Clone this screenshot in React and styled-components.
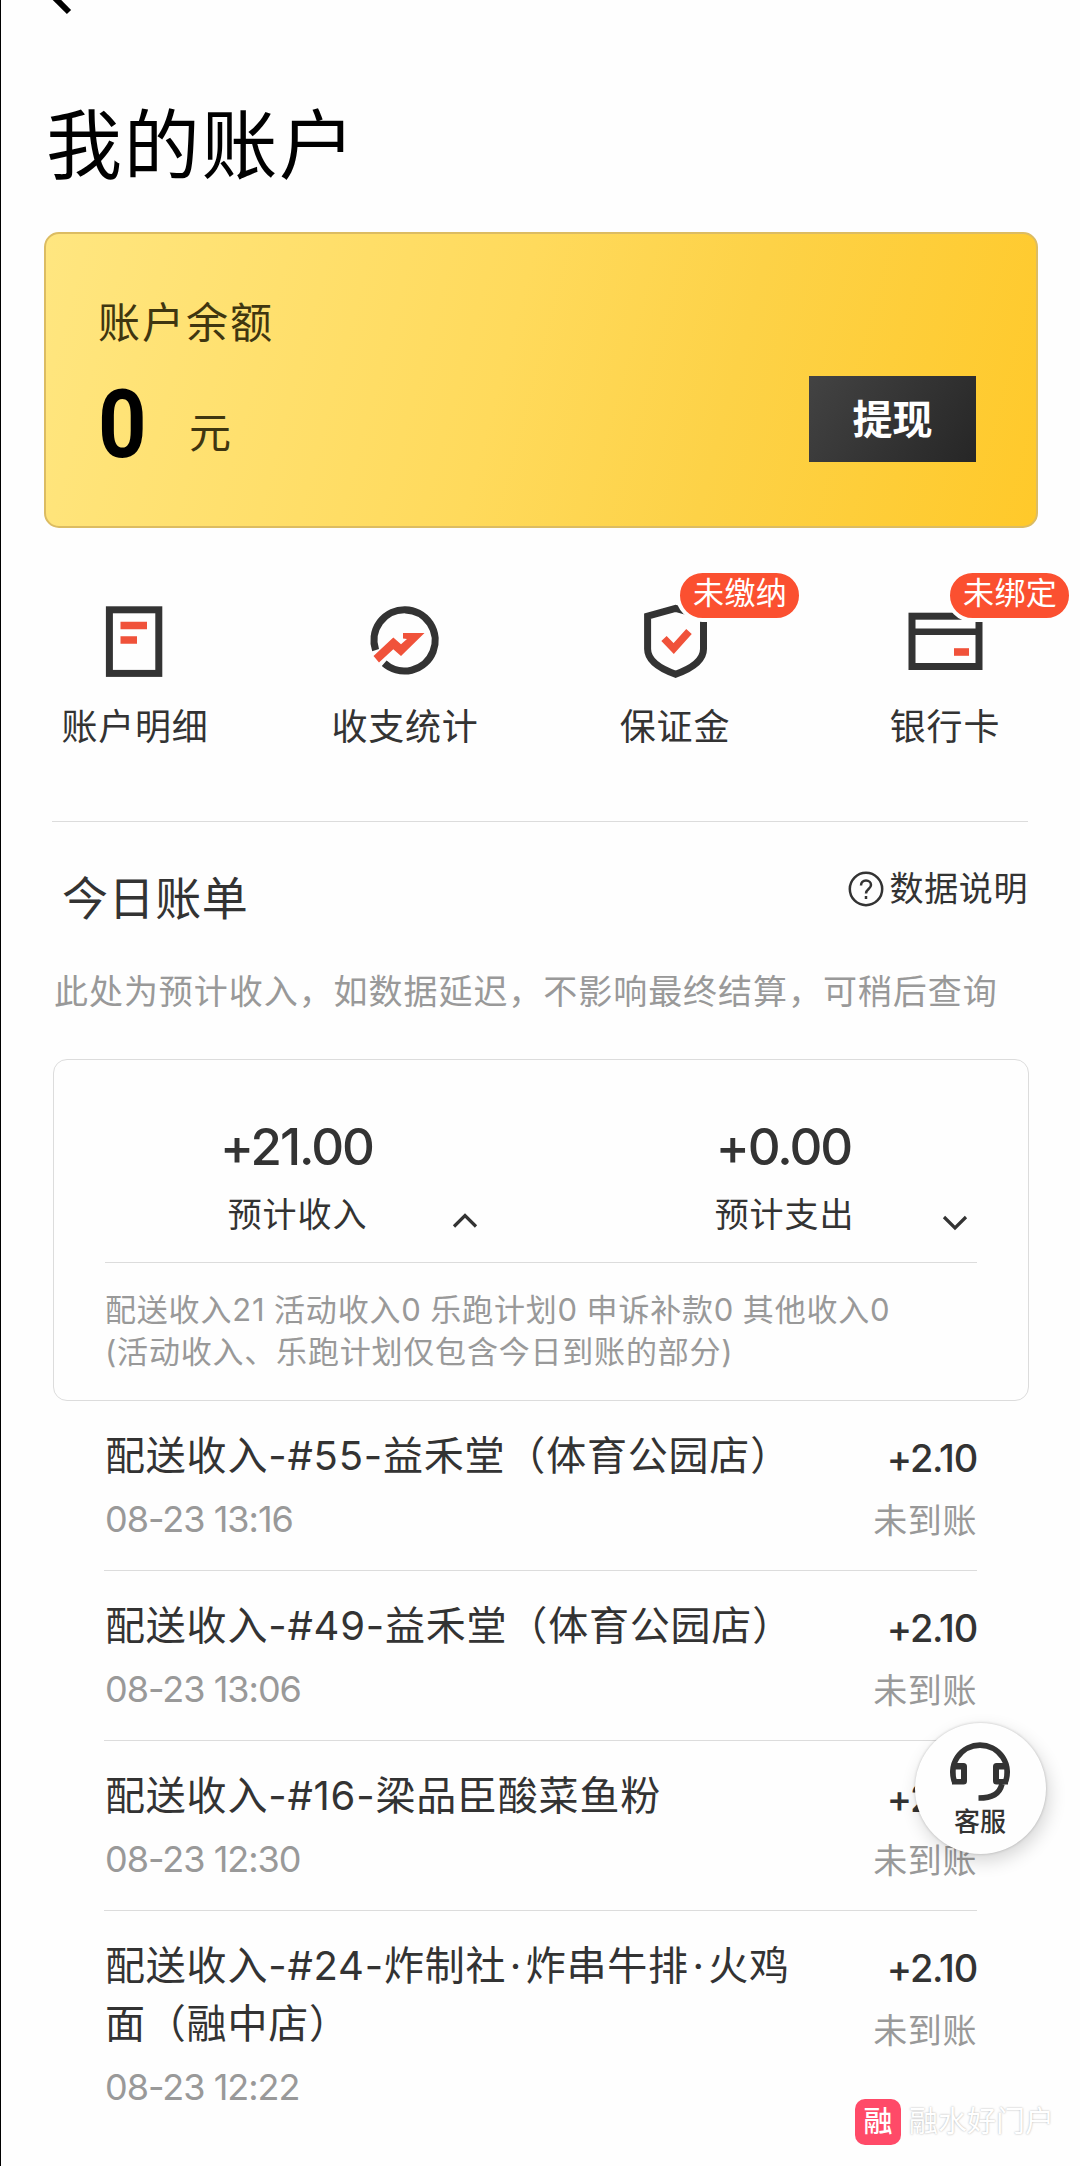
import React, { Fragment } from 'react';
import styled, { createGlobalStyle } from 'styled-components';

const GlobalStyle = createGlobalStyle`
  * {
    box-sizing: border-box;
  }
  body {
    margin: 0;
    background: #fefefe;
    font-family: Inter, 'Noto Sans CJK SC', sans-serif;
    color: #333;
  }
`;

const Page = styled.div`
  position: relative;
  width: 1080px;
  height: 2166px;
  overflow: hidden;
  background: #fefefe;
  box-shadow: inset 1px 0 0 #000;
`;

const NavBar = styled.div`
  height: 101px;
  padding-left: 40px;
  svg {
    display: block;
  }
`;

const PageTitle = styled.h1`
  margin: 0 0 43px 46px;
  font-size: 76px;
  font-weight: 400;
  letter-spacing: 1.7px;
  line-height: 88px;
  color: #000;
`;

const BalanceCard = styled.div`
  display: flex;
  justify-content: space-between;
  margin: 0 42px 0 44px;
  height: 296px;
  padding: 60px 60px 0 52px;
  border: 2px solid #dcbc62;
  border-radius: 15px;
  background: linear-gradient(105deg, #ffe680 0%, #ffda5c 46%, #fdd247 68%, #ffc92a 100%);
`;

const BalanceLabel = styled.div`
  font-size: 42px;
  letter-spacing: 2px;
  line-height: 58px;
  color: #3f3610;
`;

const BalanceRow = styled.div`
  display: flex;
  align-items: flex-start;
  margin-top: 33px;
`;

const BalanceValue = styled.div`
  width: 91px;
  font-family: Roboto, sans-serif;
  font-size: 94px;
  font-weight: 700;
  line-height: 80px;
  color: #000;
  transform: scaleX(0.9);
  transform-origin: 0 50%;
`;

const BalanceUnit = styled.div`
  margin-top: 19px;
  font-size: 42px;
  line-height: 58px;
  color: #3f3610;
`;

const WithdrawButton = styled.button`
  width: 167px;
  height: 86px;
  margin-top: 82px;
  padding: 2px 0 0;
  border: none;
  background: linear-gradient(125deg, #434343, #262626);
  color: #fff;
  font-family: inherit;
  font-size: 40px;
  font-weight: 600;
  line-height: 84px;
`;

const Menu = styled.div`
  display: grid;
  grid-template-columns: repeat(4, 1fr);
  height: 293px;
  padding-top: 75px;
`;

const MenuItem = styled.div`
  position: relative;
  display: flex;
  flex-direction: column;
  align-items: center;
  gap: 26px;
  font-size: 36px;
  letter-spacing: 0.8px;
  line-height: 44px;
`;

const Badge = styled.span`
  position: absolute;
  top: -34px;
  left: 136px;
  height: 53px;
  padding: 0 12px 0 13px;
  border: 4px solid #fefefe;
  border-radius: 27px;
  background: #fb5030;
  color: #fff;
  font-size: 31px;
  letter-spacing: 0.4px;
  line-height: 39px;
  white-space: nowrap;
`;

const Divider = styled.div`
  height: 1px;
  margin: 0 ${({ $inset }) => $inset}px;
  background: #dcdcdc;
`;

const SectionHead = styled.div`
  display: flex;
  justify-content: space-between;
  align-items: flex-start;
  padding: 48px 52px 0 62px;
`;

const SectionTitle = styled.h2`
  margin: 0;
  font-size: 46px;
  font-weight: 400;
  letter-spacing: 0.6px;
  line-height: 56px;
`;

const Help = styled.div`
  display: flex;
  align-items: center;
  gap: 6px;
  font-size: 34px;
  letter-spacing: 0.6px;
  line-height: 38px;
`;

const Notice = styled.p`
  margin: 44px 0 45px 54px;
  font-size: 34px;
  letter-spacing: 0.95px;
  line-height: 44px;
  color: #999;
  white-space: nowrap;
`;

const Summary = styled.div`
  height: 342px;
  margin: 0 51px 0 53px;
  border: 1px solid #dcdcdc;
  border-radius: 14px;
`;

const SummaryColumns = styled.div`
  display: grid;
  grid-template-columns: 1fr 1fr;
  height: 202px;
  padding-top: 59px;
`;

const SummaryColumn = styled.div`
  display: flex;
  flex-direction: column;
  align-items: center;
  position: relative;
`;

const SummaryAmount = styled.div`
  margin-right: 2px;
  font-size: 51px;
  font-weight: 500;
  letter-spacing: -2px;
  line-height: 56px;
`;

const SummaryLabel = styled.div`
  margin-top: 20px;
  font-size: 34px;
  letter-spacing: 0.9px;
  line-height: 40px;
`;

const Chevron = styled.svg`
  position: absolute;
  left: ${({ $left }) => $left}px;
  top: ${({ $top }) => $top}px;
`;

const Detail = styled.div`
  padding: 26px 0 0 51px;
  font-size: 31px;
  letter-spacing: 0.8px;
  word-spacing: -0.8px;
  line-height: 42px;
  color: #999;
  white-space: nowrap;
`;

const BillList = styled.div`
  margin: 0 103px 0 104px;
`;

const Bill = styled.div`
  display: flex;
  justify-content: space-between;
  min-height: 170px;
  padding: 26px 0 24px 1px;
  border-bottom: 1px solid #dcdcdc;
  &:last-child {
    border-bottom: none;
  }
`;

const BillTitle = styled.div`
  width: 700px;
  font-size: 40px;
  letter-spacing: 0.8px;
  line-height: 58px;
`;

const Dot = styled.span`
  margin: 0 3.5px;
`;

const BillTime = styled.div`
  margin-top: 14px;
  font-size: 36px;
  letter-spacing: -1px;
  line-height: 40px;
  color: #999;
`;

const BillSide = styled.div`
  padding-top: 2px;
  text-align: right;
  white-space: nowrap;
`;

const BillAmount = styled.div`
  font-size: 38px;
  font-weight: 500;
  letter-spacing: -1.2px;
  line-height: 58px;
`;

const BillStatus = styled.div`
  margin-top: 14px;
  font-size: 34px;
  letter-spacing: 0.6px;
  line-height: 40px;
  color: #999;
`;

const ServiceButton = styled.div`
  position: absolute;
  left: 915px;
  top: 1723px;
  display: flex;
  flex-direction: column;
  align-items: center;
  width: 131px;
  height: 131px;
  padding: 18px 1px 0 0;
  border-radius: 50%;
  background: #fefefe;
  box-shadow: 0 0 3px rgba(0, 0, 0, 0.22), 3px 7px 18px rgba(0, 0, 0, 0.16);
  font-size: 26px;
  font-weight: 500;
  line-height: 30px;
  gap: 4px;
`;

const Watermark = styled.div`
  position: absolute;
  left: 855px;
  top: 2099px;
  display: flex;
  align-items: center;
  gap: 8px;
  font-size: 29px;
  line-height: 46px;
  color: #fff;
  text-shadow: 0 0 2px #aaa;
`;

const WatermarkLogo = styled.span`
  width: 46px;
  height: 46px;
  border-radius: 10px;
  background: #ff4a68;
  font-weight: 500;
  text-align: center;
  text-shadow: none;
`;

const DetailIcon = () => (
  <svg width="76" height="76" viewBox="0 0 76 76" fill="none">
    <rect x="12.4" y="6.8" width="49.4" height="63.6" stroke="#333" strokeWidth="7" />
    <path d="M23.5 22.5h26.500M23.500 37h16.500" stroke="#f0523a" strokeWidth="7.400" />
  </svg>
);

const StatsIcon = () => (
  <svg width="76" height="76" viewBox="0 0 76 76" fill="none">
    <path d="M8.6 47.2A30.6 30.6 0 1 1 17.2 60.2" stroke="#333" strokeWidth="7.2" />
    <path
      d="M6.500 53 26.300 34.500l7.700 6.800 6-5.300-4-.5v-5.500h21.500L34 53l-7.700-6.800L12 59.500z"
      fill="#f0523a"
    />
  </svg>
);

const ShieldIcon = () => (
  <svg width="76" height="76" viewBox="0 0 76 76" fill="none">
    <path
      d="M38.600 5.400 10.600 13.200V46c0 11 12 19.500 28 25.200C54.600 65.500 66.500 57 66.500 46V13.200z"
      stroke="#333"
      strokeWidth="7"
    />
    <path d="M27 35.500l9.700 10L52 28.500" stroke="#f0523a" strokeWidth="7.400" />
  </svg>
);

const CardIcon = () => (
  <svg width="76" height="76" viewBox="0 0 76 76" fill="none">
    <rect x="5" y="13.2" width="67" height="50.3" stroke="#333" strokeWidth="7" />
    <path d="M5 28.800h67" stroke="#333" strokeWidth="6.600" />
    <path d="M47 49h15" stroke="#f0523a" strokeWidth="7.600" />
  </svg>
);

const HeadsetIcon = () => (
  <svg width="62" height="62" viewBox="0 0 62 62" fill="none">
    <g stroke="#333" strokeWidth="5.600">
      <path d="M6 42A27.200 27.200 0 1 1 56 42" />
      <path d="M53 43c-2.500 10-9.500 14-23.500 14" />
    </g>
    <path
      fill="#333"
      fillRule="evenodd"
      d="M2.500 24q0-2 2-2h10q3.500 0 3.500 3.500V40q0 3.500-3.500 3.500H3zM6.500 28.500v9.500h5.500v-9.500z"
    />
    <path
      fill="#333"
      fillRule="evenodd"
      d="M59.500 24q0-2-2-2h-10Q44 22 44 25.500V40q0 3.500 3.500 3.500H59zM55.500 28.500v9.500H50v-9.500z"
    />
  </svg>
);

const HelpIcon = () => (
  <svg width="36" height="36" viewBox="0 0 36 36" fill="none" stroke="#333" strokeWidth="2.500">
    <circle cx="18" cy="18" r="16.200" />
    <path d="M13 14.500c0-3 2-5 5-5s5 2 5 4.500c0 4-5 4-5 8.500" />
    <path d="M18 25v3" />
  </svg>
);

const menus = [
  { label: '账户明细', icon: <DetailIcon /> },
  { label: '收支统计', icon: <StatsIcon /> },
  { label: '保证金', icon: <ShieldIcon />, badge: '未缴纳' },
  { label: '银行卡', icon: <CardIcon />, badge: '未绑定' },
];

const bills = [
  { title: '配送收入-#55-益禾堂（体育公园店）', time: '08-23 13:16' },
  { title: '配送收入-#49-益禾堂（体育公园店）', time: '08-23 13:06' },
  { title: '配送收入-#16-梁品臣酸菜鱼粉', time: '08-23 12:30' },
  { title: '配送收入-#24-炸制社·炸串牛排·火鸡面（融中店）', time: '08-23 12:22' },
];

const App = () => {
  return (
    <Page lang="zh-CN">
      <GlobalStyle />
      <NavBar>
        <svg width="40" height="20" fill="none">
          <path d="M13-4 29 12" stroke="#000" strokeWidth="6" />
        </svg>
      </NavBar>
      <PageTitle>我的账户</PageTitle>
      <BalanceCard>
        <div>
          <BalanceLabel>账户余额</BalanceLabel>
          <BalanceRow>
            <BalanceValue>0</BalanceValue>
            <BalanceUnit>元</BalanceUnit>
          </BalanceRow>
        </div>
        <WithdrawButton>提现</WithdrawButton>
      </BalanceCard>
      <Menu>
        {menus.map((e) => (
          <MenuItem key={e.label}>
            {e.icon}
            {e.label}
            {e.badge && <Badge>{e.badge}</Badge>}
          </MenuItem>
        ))}
      </Menu>
      <Divider $inset={52} />
      <SectionHead>
        <SectionTitle>今日账单</SectionTitle>
        <Help>
          <HelpIcon />
          数据说明
        </Help>
      </SectionHead>
      <Notice>此处为预计收入，如数据延迟，不影响最终结算，可稍后查询</Notice>
      <Summary>
        <SummaryColumns>
          <SummaryColumn>
            <SummaryAmount>+21.00</SummaryAmount>
            <SummaryLabel>预计收入</SummaryLabel>
            <Chevron $left={398} $top={92} width="26" height="18" fill="none">
              <path d="M2 15.500 13 4.500l11 11" stroke="#333" strokeWidth="3.200" />
            </Chevron>
          </SummaryColumn>
          <SummaryColumn>
            <SummaryAmount>+0.00</SummaryAmount>
            <SummaryLabel>预计支出</SummaryLabel>
            <Chevron $left={401} $top={95} width="26" height="18" fill="none">
              <path d="M2 3l11 11L24 3" stroke="#333" strokeWidth="3.200" />
            </Chevron>
          </SummaryColumn>
        </SummaryColumns>
        <Divider $inset={51} />
        <Detail>
          配送收入21 活动收入0 乐跑计划0 申诉补款0 其他收入0
          <br />
          (活动收入、乐跑计划仅包含今日到账的部分)
        </Detail>
      </Summary>
      <BillList>
        {bills.map((e) => (
          <Bill key={e.time}>
            <div>
              <BillTitle>
                {e.title.split('·').map((part, i) => (
                  <Fragment key={i}>
                    {i > 0 && <Dot>·</Dot>}
                    {part}
                  </Fragment>
                ))}
              </BillTitle>
              <BillTime>{e.time}</BillTime>
            </div>
            <BillSide>
              <BillAmount>+2.10</BillAmount>
              <BillStatus>未到账</BillStatus>
            </BillSide>
          </Bill>
        ))}
      </BillList>
      <ServiceButton>
        <HeadsetIcon />
        客服
      </ServiceButton>
      <Watermark>
        <WatermarkLogo>融</WatermarkLogo>
        融水好门户
      </Watermark>
    </Page>
  );
};

export default App;
